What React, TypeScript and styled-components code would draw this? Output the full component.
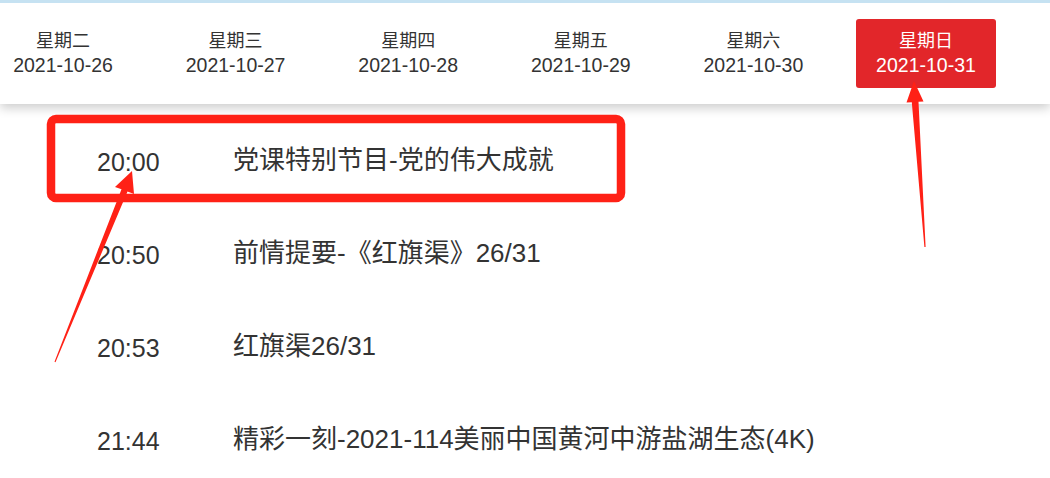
import styled, { createGlobalStyle } from "styled-components";

const GlobalStyle = createGlobalStyle`
  html, body {
    margin: 0;
    padding: 0;
    background: #fff;
  }
  body {
    font-family: "Liberation Sans", "Noto Sans CJK SC", sans-serif;
    color: #333;
    overflow: hidden;
  }
`;

const Page = styled.div`
  position: relative;
  width: 1050px;
  height: 478px;
  border-top: 3px solid #c6e2f2;
  box-sizing: border-box;
  overflow: hidden;
`;

const Header = styled.div`
  height: 101px;
  display: flex;
  align-items: center;
  background: #fff;
  box-shadow: 0 4px 10px rgba(0, 0, 0, 0.2);
  position: relative;
  z-index: 1;
`;

const Tabs = styled.div`
  display: flex;
  gap: 32.6px;
  margin-left: -7px;
`;

const Tab = styled.div<{ $active?: boolean }>`
  width: 140px;
  height: 69px;
  flex: none;
  display: flex;
  flex-direction: column;
  align-items: center;
  justify-content: center;
  border-radius: 3px;
  background: ${(p) => (p.$active ? "#e2262a" : "transparent")};
  color: ${(p) => (p.$active ? "#fff" : "#333")};
`;

const Weekday = styled.span`
  font-size: 18px;
  line-height: 24px;
`;

const DateText = styled.span`
  font-size: 19.5px;
  line-height: 25px;
`;

const List = styled.div`
  padding-top: 11px;
`;

const Row = styled.div`
  height: 93px;
  display: flex;
  align-items: center;
  padding-left: 97px;
  font-size: 25px;
  line-height: 30px;
`;

const Time = styled.span`
  width: 136px;
  flex: none;
`;

const Title = styled.span`
  font-size: 26px;
  position: relative;
  top: -2px;
`;

const Marks = styled.svg`
  position: absolute;
  left: 0;
  top: -3px;
  pointer-events: none;
  z-index: 2;
`;

const days = [
  ["星期二", "2021-10-26"],
  ["星期三", "2021-10-27"],
  ["星期四", "2021-10-28"],
  ["星期五", "2021-10-29"],
  ["星期六", "2021-10-30"],
  ["星期日", "2021-10-31"],
];

const programs = [
  ["20:00", "党课特别节目-党的伟大成就"],
  ["20:50", "前情提要-《红旗渠》26/31"],
  ["20:53", "红旗渠26/31"],
  ["21:44", "精彩一刻-2021-114美丽中国黄河中游盐湖生态(4K)"],
];

export default function App() {
  return (
    <>
      <GlobalStyle />
      <Page>
        <Header>
          <Tabs>
            {days.map(([w, d], i) => (
              <Tab key={d} $active={i === days.length - 1}>
                <Weekday>{w}</Weekday>
                <DateText>{d}</DateText>
              </Tab>
            ))}
          </Tabs>
        </Header>
        <List>
          {programs.map(([t, name]) => (
            <Row key={t}>
              <Time>{t}</Time>
              <Title>{name}</Title>
            </Row>
          ))}
        </List>
        <Marks width="1050" height="478" viewBox="0 0 1050 478">
          <rect x="51" y="119" width="570" height="79" rx="5" fill="none" stroke="#ff2116" strokeWidth="8.5" />
          <polygon
            fill="#ff2116"
            points="132,171 134,194 127.5,191.6 55.5,362.2 54.5,361.8 121.5,189.3 115,187"
          />
          <polygon
            fill="#ff2116"
            points="914,81 923.5,101.5 918.5,101.8 925.6,247 924.4,247 911.8,102.2 906.5,102.5"
          />
        </Marks>
      </Page>
    </>
  );
}
